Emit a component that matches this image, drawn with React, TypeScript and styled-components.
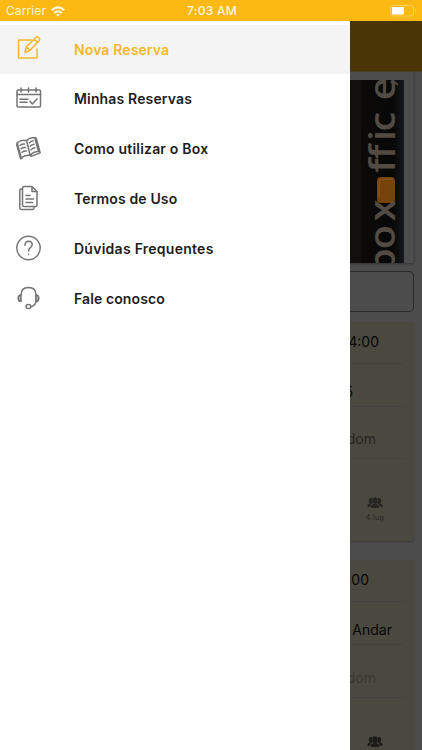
import React from "react";
import styled, { createGlobalStyle } from "styled-components";

const GlobalStyle = createGlobalStyle`
  * { box-sizing: border-box; }
  body { margin: 0; background: #fff; font-family: Inter, "Liberation Sans", sans-serif; }
`;

const Screen = styled.div`
  width: 422px;
  height: 750px;
  overflow: hidden;
  display: flex;
  flex-direction: column;
`;

const StatusBar = styled.header`
  height: 21px;
  flex: none;
  display: grid;
  grid-template-columns: 1fr auto 1fr;
  align-items: center;
  padding: 1px 5px 0 6px;
  background: #fdb913;
  color: #fff6dc;
  font-size: 12px;
  line-height: 20px;
`;
const Carrier = styled.div`
  display: flex;
  align-items: center;
  gap: 5px;
  letter-spacing: 0.1px;
`;
const Clock = styled.div`
  font-weight: 500;
  letter-spacing: 0.3px;
  padding-left: 1px;
`;
const Battery = styled.div`
  display: flex;
  justify-content: flex-end;
`;

const Body = styled.div`
  flex: 1;
  display: flex;
  min-height: 0;
`;
const Drawer = styled.nav`
  width: 350px;
  flex: none;
  background: #fff;
  padding-top: 4px;
`;
const MenuItem = styled.a<{ $active?: boolean }>`
  display: flex;
  align-items: center;
  height: ${(p) => (p.$active ? 49 : 50)}px;
  margin-bottom: ${(p) => (p.$active ? 1 : 0)}px;
  padding-left: 14px;
  color: ${(p) => (p.$active ? "#f5b82e" : "#1d1d1d")};
  background: ${(p) => (p.$active ? "#f4f4f4" : "#fff")};
`;
const MenuIcon = styled.svg<{ $active?: boolean }>`
  width: 30px;
  height: 30px;
  flex: none;
  margin-bottom: 4px;
  fill: none;
  stroke: ${(p) => (p.$active ? "#f5b82e" : "#747474")};
  stroke-width: 1.5;
  stroke-linecap: round;
  stroke-linejoin: round;
`;
const MenuLabel = styled.span<{ $spacing: number; $active?: boolean }>`
  margin: 0 0 ${(p) => (p.$active ? 0 : 2)}px 30px;
  white-space: nowrap;
  font-size: 14px;
  line-height: 20px;
  font-weight: 600;
  letter-spacing: ${(p) => p.$spacing}px;
`;

const Page = styled.main`
  flex: 1;
  min-width: 0;
  overflow: hidden;
  background: #4c4c4c;
`;
const AppBar = styled.div`
  height: 51px;
  background: #4a3506;
  border-bottom: 1px solid #4b4029;
`;
const PhotoCard = styled.section`
  width: 64px;
  height: 191px;
  padding-top: 8px;
  background: #4d4d4d;
  border-right: 1px solid #474747;
  box-shadow: 0 1px 2px #333;
`;
const Photo = styled.svg`
  display: block;
  width: 54px;
  height: 183px;
`;
const SearchField = styled.div`
  width: 64px;
  height: 41px;
  margin: 8px 0 10px;
  border: 1px solid #2b2b2b;
  border-left: 0;
  border-radius: 0 5px 5px 0;
`;
const RoomCard = styled.article`
  width: 64px;
  height: 219px;
  margin-bottom: 19px;
  overflow: hidden;
  background: #4a493f;
  border-radius: 0 3px 3px 0;
  box-shadow: 0 1px 2px #393939;
`;
const CardRow = styled.div<{ $height: number; $end: number; $faint?: string; $drop?: number; $lift?: number }>`
  width: 54px;
  height: ${(p) => p.$height}px;
  padding-right: ${(p) => p.$end}px;
  padding-top: ${(p) => p.$drop ?? 0}px;
  padding-bottom: ${(p) => p.$lift ?? 0}px;
  display: flex;
  align-items: center;
  justify-content: flex-end;
  white-space: nowrap;
  overflow: hidden;
  border-bottom: 1px solid #434341;
  color: ${(p) => p.$faint ?? "#080808"};
  font-size: 14px;
`;
const Seats = styled.div<{ $top: number; $tone: string }>`
  width: 50px;
  padding-top: ${(p) => p.$top}px;
  display: flex;
  flex-direction: column;
  align-items: center;
  gap: 5px;
  color: ${(p) => p.$tone};
  font-size: 7px;
  line-height: 9px;
  letter-spacing: 0.35px;
`;

const icons: Record<string, React.ReactNode> = {
  edit: (
    <>
      <path d="M17.500 7H4.500V25H23V16" />
      <path d="M11 19.500l1.400-5.700L22 4.300q1.200-1 2.400.1l.9.900q1 1.200-.1 2.300L16 17.200ZM20.200 6.200l3.200 3.200M12.700 14l3.200 3.200" />
    </>
  ),
  calendar: (
    <>
      <rect x="3" y="7" width="23.500" height="17" rx="1" />
      <path d="M3 11.500h23.500M7 5v4M14.500 5v4M22 5v4M6 16.200h8M6 19.300h7M16 18.200l2.400 2.700 4.700-5.200" />
    </>
  ),
  book: (
    <>
      <path d="M12.600 7.800Q8 6.300 3.200 9.800L7.200 25q3.800-3.500 9-2.500 3.200-4 8.300-3.900L20.800 4.500Q15 4.500 12.600 7.800l3.600 14.700M3.200 9.800L2.600 11.200l4 14.600 1.400-.5M20.800 4.500l1.400.8 4 14.600-9 3.500-1-.9" />
      <path d="M6.200 12.300q2-1.500 4.300-1.200M7.100 15.800q2-1.500 4.300-1.200M8 19.300q2-1.500 4.300-1.200M15.300 9.700q1.700-1.700 3.800-1.900M16.200 13.200q1.700-1.700 3.800-1.900M17.100 16.700q1.700-1.700 3.800-1.900" />
    </>
  ),
  documents: (
    <>
      <path d="M10 3.500h8l5 5V22a1.500 1.500 0 0 1-1.500 1.500H10A1.500 1.500 0 0 1 8.500 22V5A1.500 1.500 0 0 1 10 3.500ZM18 3.500v5h5" />
      <path d="M8.500 6H7.300a1.500 1.500 0 0 0-1.500 1.500V25A1.500 1.500 0 0 0 7.300 26.500h11.200A1.500 1.500 0 0 0 20 25v-1.500M12 12.500h4M12 16h7.500M12 19.500h6.500" />
    </>
  ),
  help: (
    <>
      <circle cx="14.500" cy="15" r="11.700" />
      <path d="M11 12.200q0-4 3.700-4 3.500.2 3.500 3.400 0 1.700-1.900 3-1.700 1.200-1.700 3.300M14.600 21.300v.2" />
    </>
  ),
  headset: (
    <>
      <path d="M7 12Q7 4.500 14.500 4.500T22 12v5.500q0 5-5 6.200" />
      <path d="M7 12q-2.800 0-2.800 3.200T7 18.400ZM22 12q2.800 0 2.800 3.200T22 18.400Z" fill="#bbb" />
      <ellipse cx="14.400" cy="23.500" rx="2.400" ry="2" />
    </>
  ),
};

const menu = [
  { icon: "edit", label: "Nova Reserva", active: true, spacing: 0.12 },
  { icon: "calendar", label: "Minhas Reservas", spacing: 0.15 },
  { icon: "book", label: "Como utilizar o Box", spacing: 0.2 },
  { icon: "documents", label: "Termos de Uso", spacing: 0.14 },
  { icon: "help", label: "Dúvidas Frequentes", spacing: 0.26 },
  { icon: "headset", label: "Fale conosco", spacing: 0.1 },
];

const People = () => (
  <svg width="16" height="11" viewBox="0 0 16 11" fill="currentColor">
    <path d="M.5 10V8q0-1 2.300-1.600Q1.500 5 1.800 2.700 2.200 1 4 1q1 0 1.500.8Q4.800 4 6 6L3.500 7.800V10ZM15.500 10V8q0-1-2.300-1.600Q14.500 5 14.200 2.700 13.800 1 12 1q-1 0-1.500.8.700 2.200-.5 4.200l2.500 1.800V10Z" />
    <path d="M4 11V9q0-1 2.800-2Q5.200 5.500 5.500 2.700 5.900.3 8 .3t2.500 2.400Q10.800 5.500 9.200 7 12 8 12 9v2Z" />
  </svg>
);

const rooms = [
  { time: "4:00", timeEnd: 25, floor: "5", floorEnd: 51, faint: "#252521", h: [42, 43, 52], seatTop: 38, tone: "#262622" },
  { time: "00", timeEnd: 35, floor: "Andar", floorEnd: 12, faint: "#383833", h: [42, 43, 53], seatTop: 38, tone: "#1b1b19" },
];

export default function App() {
  return (
    <Screen>
      <GlobalStyle />
      <StatusBar>
        <Carrier>
          Carrier
          <svg width="14" height="11" viewBox="0 0 14 11" fill="none" stroke="#fffaf0" strokeWidth="2.200">
            <path d="M.8 4.200q6.200-5.500 12.400 0M3.200 7q3.800-3.200 7.600 0" />
            <path d="M5 8.600q2-1.400 4 0L7 10.700Z" fill="#fffaf0" stroke="none" />
          </svg>
        </Carrier>
        <Clock>7:03 AM</Clock>
        <Battery>
          <svg width="27" height="12" viewBox="0 0 27 12">
            <rect x=".5" y=".5" width="23" height="10.500" rx="2.500" fill="none" stroke="#fed05c" />
            <rect x="2" y="2" width="12" height="7.500" rx=".8" fill="#fff" />
            <path d="M25 3.800q2 2 0 4Z" fill="#fed05c" />
          </svg>
        </Battery>
      </StatusBar>
      <Body>
        <Drawer>
          {menu.map((m) => (
            <MenuItem key={m.icon} $active={m.active}>
              <MenuIcon viewBox="0 0 30 30" $active={m.active}>{icons[m.icon]}</MenuIcon>
              <MenuLabel $spacing={m.spacing} $active={m.active}>{m.label}</MenuLabel>
            </MenuItem>
          ))}
        </Drawer>
        <Page>
          <AppBar />
          <PhotoCard>
            <Photo viewBox="0 0 54 183">
              <defs>
                <linearGradient id="edge">
                  <stop offset="0" stopColor="#0d0b09" />
                  <stop offset=".8" stopColor="#080808" />
                  <stop offset="1" stopColor="#15171a" />
                </linearGradient>
              </defs>
              <rect width="54" height="183" fill="url(#edge)" />
              <rect width="11" height="183" fill="#11100d" />
              <rect x="27" y="97" width="18" height="26" rx="4" fill="#764408" />
              <path d="M29 117V103q0-4 4-4h10" fill="none" stroke="#8c5920" />
              <path d="M42 0l6 5" stroke="#514b43" strokeWidth="2" />
              <g transform="translate(45 183) rotate(-90) scale(1.1 1)">
                <text
                  x="-9 12.500 38 82 94.500 111 119.500 148"
                  y="0"
                  fontFamily="Open Sans"
                  fontSize="36"
                  fontWeight="600"
                  fill="#514b43"
                >
                  boxffice
                </text>
              </g>
            </Photo>
          </PhotoCard>
          <SearchField />
          {rooms.map((r) => (
            <RoomCard key={r.time}>
              <CardRow $height={r.h[0]} $end={r.timeEnd} $lift={3}>{r.time}</CardRow>
              <CardRow $height={r.h[1]} $end={r.floorEnd} $drop={12}>{r.floor}</CardRow>
              <CardRow $height={r.h[2]} $end={28} $drop={12} $faint={r.faint}>dom</CardRow>
              <Seats $top={r.seatTop} $tone={r.tone}>
                <People />
                4 lug
              </Seats>
            </RoomCard>
          ))}
        </Page>
      </Body>
    </Screen>
  );
}
